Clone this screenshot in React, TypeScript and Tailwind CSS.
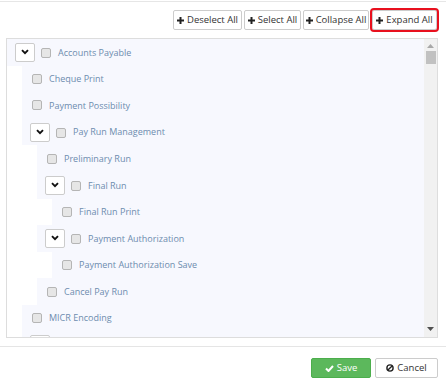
import React from 'react';

interface Node {
  label: string;
  level: number;
  toggle?: boolean;
}

const nodes: Node[] = [
  { label: 'Accounts Payable', level: 0, toggle: true },
  { label: 'Cheque Print', level: 1 },
  { label: 'Payment Possibility', level: 1 },
  { label: 'Pay Run Management', level: 1, toggle: true },
  { label: 'Preliminary Run', level: 2 },
  { label: 'Final Run', level: 2, toggle: true },
  { label: 'Final Run Print', level: 3 },
  { label: 'Payment Authorization', level: 2, toggle: true },
  { label: 'Payment Authorization Save', level: 3 },
  { label: 'Cancel Pay Run', level: 2 },
  { label: 'MICR Encoding', level: 1 },
  // scrolled out of view, only the top of its toggle shows
  { label: '', level: 1, toggle: true },
];

const indent = ['ml-0', 'ml-[15px]', 'ml-[30px]', 'ml-[45px]'];

const Plus = () => (
  <svg width="7" height="7" viewBox="0 0 7 7" className="mr-[3px]">
    <rect x="2.5" y="0" width="2" height="7" fill="#222" />
    <rect x="0" y="2.5" width="7" height="2" fill="#222" />
  </svg>
);

const Chevron = () => (
  <svg width="8" height="6" viewBox="0 0 8 6">
    <path d="M1 1.2 L4 4.2 L7 1.2" fill="none" stroke="#111" strokeWidth="1.9" />
  </svg>
);

const Checkbox = () => (
  <span className="inline-block w-[10px] h-[10px] rounded-[2px] border border-[#b5b5b5] bg-[#e6e6e6] shrink-0" />
);

const ToolButton = ({ label, w, highlight }: { label: string; w: string; highlight?: boolean }) => (
  <button
    className={
      'h-[20px] flex items-center justify-center bg-white border border-[#cccccc] rounded-[2px] text-[9.5px] text-[#333] ' +
      w +
      (highlight ? ' outline-2 outline-[#e8101e] ml-[1px]' : '')
    }
  >
    <Plus />
    {label}
  </button>
);

const App: React.FC = () => {
  return (
    <div className="w-[446px] h-[387px] bg-white font-['Open_Sans',sans-serif] overflow-hidden">
      <div className="mt-[1px] border-t border-[#e6e6e6]" />

      {/* toolbar */}
      <div className="flex justify-end gap-[2px] mt-[8px] pr-[9px]">
        <ToolButton label="Deselect All" w="w-[69px]" />
        <ToolButton label="Select All" w="w-[57px]" />
        <ToolButton label="Collapse All" w="w-[66px]" />
        <ToolButton label="Expand All" w="w-[65px]" highlight />
      </div>

      {/* tree */}
      <div className="ml-[6px] mt-[8px] w-[432px] h-[300px] border border-[#dddddd] flex">
        <div className="flex-1 overflow-hidden">
          {nodes.map((n, i) => (
            <div key={i} className={'h-[26.6px] flex items-center bg-[#f7f8fe] ' + indent[n.level]}>
              {n.toggle ? (
                <>
                  <span className="ml-[8px] w-[20px] h-[19px] border border-[#cccccc] rounded-[2px] bg-white flex items-center justify-center shrink-0">
                    <Chevron />
                  </span>
                  <span className="ml-[6px]">
                    <Checkbox />
                  </span>
                </>
              ) : (
                <span className="ml-[10px] flex">
                  <Checkbox />
                </span>
              )}
              {n.label && (
                <span className="ml-[7px] text-[9px] text-[#6d8cae] whitespace-nowrap">{n.label}</span>
              )}
            </div>
          ))}
        </div>

        {/* scrollbar */}
        <div className="w-[13px] bg-[#f1f1f1] flex flex-col items-center">
          <svg width="7" height="4" viewBox="0 0 7 4" className="mt-[5px]">
            <path d="M0 4 L3.5 0 L7 4 Z" fill="#a8a8a8" />
          </svg>
          <div className="mt-[3px] w-[10px] h-[13px] bg-[#c1c1c1]" />
          <div className="flex-1" />
          <svg width="7" height="4" viewBox="0 0 7 4" className="mb-[6px]">
            <path d="M0 0 L7 0 L3.5 4 Z" fill="#505050" />
          </svg>
        </div>
      </div>

      {/* footer */}
      <div className="mt-[8px] border-t border-[#e5e5e5] flex justify-end gap-[4px] pr-[8px] pt-[11px]">
        <button className="w-[60px] h-[20px] flex items-center justify-center bg-[#5cb85c] border border-[#4cae4c] rounded-[2px] text-white text-[9.5px]">
          <svg width="9" height="7" viewBox="0 0 9 7" className="mr-[3px]">
            <path d="M1 3.5 L3.5 6 L8 1" fill="none" stroke="#fff" strokeWidth="2" />
          </svg>
          Save
        </button>
        <button className="w-[63px] h-[20px] flex items-center justify-center bg-white border border-[#cccccc] rounded-[2px] text-[#333] text-[9.5px]">
          <svg width="8" height="8" viewBox="0 0 8 8" className="mr-[3px]">
            <circle cx="4" cy="4" r="3.1" fill="none" stroke="#222" strokeWidth="1.4" />
            <path d="M1.9 6.1 L6.1 1.9" stroke="#222" strokeWidth="1.4" />
          </svg>
          Cancel
        </button>
      </div>
    </div>
  );
};

export default App;
